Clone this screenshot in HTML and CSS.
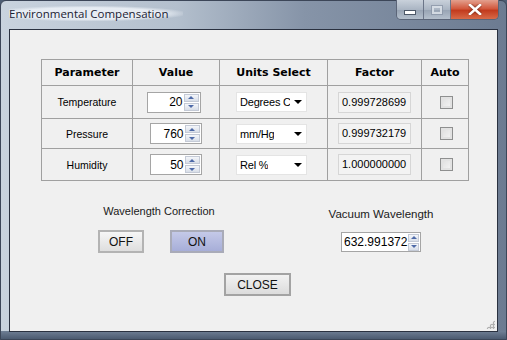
FILE: index.html
```html
<!DOCTYPE html>
<html lang="en">
<head>
  <meta charset="UTF-8">
  <title>Environmental Compensation</title>
  <link rel="stylesheet" href="styles.css">
</head>
<body>

  <div class="window">
    <!-- Title bar -->
    <div class="titlebar">
      <span class="title">Environmental Compensation</span>
      <div class="caption-btns">
        <div class="cap cap-min"><span class="min-glyph"></span></div>
        <div class="cap cap-max"><span class="max-glyph"></span></div>
        <div class="cap cap-close">
          <svg width="14" height="11" viewBox="0 0 14 11">
            <path d="M2 1 L12 10 M12 1 L2 10" stroke="#fff" stroke-width="2.6" stroke-linecap="square"/>
          </svg>
        </div>
      </div>
    </div>

    <div class="client">
      <table class="params">
        <tr class="head">
          <th class="c-param">Parameter</th>
          <th class="c-value">Value</th>
          <th class="c-units">Units Select</th>
          <th class="c-factor">Factor</th>
          <th class="c-auto">Auto</th>
        </tr>
        <tr class="r1">
          <td>Temperature</td>
          <td><div class="spin first"><span class="spin-val">20</span><span class="arrows"><i class="up"></i><i class="down"></i></span></div></td>
          <td><div class="select"><span class="sel-text">Degrees C</span><span class="caret"></span></div></td>
          <td><div class="factor">0.999728699</div></td>
          <td><span class="check"></span></td>
        </tr>
        <tr class="r2">
          <td>Pressure</td>
          <td><div class="spin narrow"><span class="spin-val">760</span><span class="arrows"><i class="up"></i><i class="down"></i></span></div></td>
          <td><div class="select"><span class="sel-text">mm/Hg</span><span class="caret"></span></div></td>
          <td><div class="factor">0.999732179</div></td>
          <td><span class="check"></span></td>
        </tr>
        <tr class="r3">
          <td>Humidity</td>
          <td><div class="spin narrow"><span class="spin-val">50</span><span class="arrows"><i class="up"></i><i class="down"></i></span></div></td>
          <td><div class="select"><span class="sel-text">Rel %</span><span class="caret"></span></div></td>
          <td><div class="factor">1.000000000</div></td>
          <td><span class="check"></span></td>
        </tr>
      </table>

      <div class="lower">
        <div class="group correction">
          <p class="label">Wavelength Correction</p>
          <div class="toggle">
            <button class="btn off">OFF</button>
            <button class="btn on">ON</button>
          </div>
        </div>
        <div class="group vacuum">
          <p class="label">Vacuum Wavelength</p>
          <div class="spin wide"><span class="spin-val">632.991372</span><span class="arrows"><i class="up"></i><i class="down"></i></span></div>
        </div>
      </div>

      <button class="btn close">CLOSE</button>
      <span class="grip"></span>
    </div>
  </div>

</body>
</html>
```

FILE: styles.css
```css
* {
  margin: 0;
  padding: 0;
  box-sizing: border-box;
}

body {
  width: 507px;
  height: 340px;
  overflow: hidden;
  font-family: 'Liberation Sans', Arial, sans-serif;
  font-size: 11px;
  color: #000;
  background: #4e5e74;
}

/* Window frame */
.window {
  width: 507px;
  height: 340px;
  display: flex;
  flex-direction: column;
  padding: 0 8px 8px 8px;
  background: linear-gradient(90deg, #c9d3de 0%, #b3bfcd 35%, #8694a8 60%, #6c7b91 100%);
  border-radius: 6px 6px 0 0;
  border: 1px solid #3c4658;
  position: relative;
}

.window::after {
  content: "";
  position: absolute;
  left: 0;
  right: 0;
  bottom: 0;
  height: 8px;
  background: linear-gradient(180deg, #6f7f95, #4b5a70);
}

.titlebar {
  height: 28px;
  display: flex;
  align-items: flex-start;
  justify-content: space-between;
}

.title {
  font-family: 'Open Sans', 'Noto Sans', sans-serif;
  font-size: 11.5px;
  color: #1b2233;
  margin-top: 5px;
  padding: 0 14px 0 0;
  background: radial-gradient(ellipse at 45% 50%, rgba(235, 240, 246, 0.9) 55%, rgba(235, 240, 246, 0) 75%);
}

.caption-btns {
  display: flex;
  margin-top: -1px;
  margin-right: -1px;
  border: 1px solid #5b6578;
  border-top: none;
  border-radius: 0 0 5px 5px;
  overflow: hidden;
  height: 20px;
}

.cap {
  display: flex;
  align-items: center;
  justify-content: center;
  height: 19px;
}

.cap-min, .cap-max {
  width: 27px;
  background: linear-gradient(180deg, #c9d1db 0%, #aab5c3 50%, #97a3b3 51%, #b4bfcc 100%);
  border-right: 1px solid #6b7588;
}

.min-glyph {
  width: 10px;
  height: 3px;
  background: #fff;
  margin-top: 5px;
  box-shadow: 0 0 0 1px #4d5868;
}

.max-glyph {
  width: 10px;
  height: 8px;
  border: 2px solid #dfe5ec;
  box-shadow: 0 0 0 1px #8b97a8;
  opacity: 0.8;
}

.cap-close {
  width: 47px;
  background: linear-gradient(180deg, #e3a08e 0%, #d2593e 45%, #c23b1e 55%, #d86a48 100%);
}

.cap-close svg path {
  filter: drop-shadow(0 0 1px #5a1a0c);
}

/* Client area */
.client {
  flex: 1;
  background: #f0f0f0;
  border: 1px solid #2a3140;
  padding: 29px 0 0 31px;
  position: relative;
  z-index: 1;
  margin-bottom: -1px;
}

/* Parameter table */
.params {
  border-collapse: collapse;
  width: 428px;
  table-layout: fixed;
}

.params th,
.params td {
  border: 1px solid #a0a0a0;
  text-align: center;
  vertical-align: middle;
  font-weight: normal;
}

.params th {
  font-family: 'DejaVu Sans', Verdana, sans-serif;
  font-weight: bold;
  font-size: 11px;
  height: 26px;
}

.c-param { width: 91px; }
.c-value { width: 87px; }
.c-units { width: 108px; }
.c-factor { width: 94px; }
.c-auto { width: 47px; }

.r1 td { height: 33px; }
.r2 td { height: 30px; }
.r3 td { height: 32px; }

.params td:first-child {
  font-size: 10.5px;
}

/* Spin box */
.spin {
  display: inline-flex;
  align-items: center;
  height: 21px;
  width: 54px;
  background: #fff;
  border: 1px solid #a5a5a5;
  vertical-align: middle;
}

.spin.first {
  margin-left: -5px;
}

.spin.narrow {
  width: 52px;
  margin-left: -1px;
}

.spin-val {
  flex: 1;
  text-align: right;
  font-size: 12px;
  padding-right: 1px;
}

.arrows {
  display: flex;
  flex-direction: column;
  gap: 1px;
  width: 15px;
  margin-right: 1px;
}

.arrows i {
  height: 8px;
  display: flex;
  align-items: center;
  justify-content: center;
  background: linear-gradient(180deg, #f4f6fa, #d8dee8);
  border: 1px solid #c4cad6;
}

.arrows i::after {
  content: "";
  border-left: 3px solid transparent;
  border-right: 3px solid transparent;
}

.arrows .up::after {
  border-bottom: 3px solid #4e6aa8;
}

.arrows .down::after {
  border-top: 3px solid #4e6aa8;
}

.spin.wide {
  width: 80px;
  height: 20px;
}

.spin.wide .spin-val {
  font-size: 12px;
  text-align: left;
  padding-left: 2px;
  white-space: nowrap;
}

/* Select */
.select {
  display: flex;
  align-items: center;
  justify-content: space-between;
  width: 71px;
  height: 20px;
  margin-left: 16px;
  background: #fff;
  border: 1px solid #e4e4e4;
  padding: 0 4px 0 3px;
  font-size: 11px;
  text-align: left;
  white-space: nowrap;
}

.sel-text {
  overflow: hidden;
  letter-spacing: -0.2px;
}

.caret {
  flex: none;
  margin-left: 4px;
  border-left: 4px solid transparent;
  border-right: 4px solid transparent;
  border-top: 4px solid #000;
}

/* Factor */
.factor {
  width: 73px;
  height: 21px;
  margin-left: 10px;
  background: #f3f3f3;
  border: 1px solid #d6d6d6;
  font-size: 11px;
  line-height: 19px;
  text-align: left;
  padding-left: 3px;
}

/* Checkbox */
.check {
  display: inline-block;
  width: 13px;
  height: 13px;
  border: 1px solid #8e8f8f;
  background: linear-gradient(135deg, #dcdcdc, #f6f6f6);
  box-shadow: inset 0 0 0 2px #e2e2e2;
  vertical-align: middle;
  margin-left: 3px;
}

/* Lower section */
.lower {
  display: flex;
  margin-top: 24px;
  margin-left: 57px;
  gap: 102px;
}

.group {
  display: flex;
  flex-direction: column;
  align-items: center;
}

.label {
  font-size: 11px;
  color: #1a1a1a;
  white-space: nowrap;
}

.correction {
  width: 126px;
  align-items: stretch;
}

.correction .label {
  text-align: center;
  margin-left: -4px;
}

.toggle {
  display: flex;
  justify-content: space-between;
  margin-top: 13px;
}

.vacuum {
  width: 110px;
}

.vacuum .label {
  margin-top: 3px;
  font-size: 11.5px;
}

.vacuum .spin {
  margin-top: 12px;
}

.btn {
  font-family: 'Liberation Sans', Arial, sans-serif;
  font-size: 12px;
  height: 23px;
  border: 2px solid #b3b3b3;
  background: linear-gradient(180deg, #f6f6f6, #dedede);
  color: #111;
  cursor: pointer;
}

.btn.off {
  width: 46px;
}

.btn.on {
  width: 54px;
  background: linear-gradient(180deg, #c4c9e8, #a7aed8);
  border-color: #a9abb8;
}

.btn.close {
  display: block;
  width: 67px;
  margin-top: 20px;
  margin-left: 183px;
  font-size: 12px;
  border-color: #a3a3a3;
  background: linear-gradient(180deg, #f2f2f2, #dcdcdc);
}

.grip {
  position: absolute;
  right: 2px;
  bottom: 2px;
  width: 9px;
  height: 9px;
  background: radial-gradient(circle, #b0b0b0 1px, transparent 1.5px) 0 0 / 3px 3px;
  clip-path: polygon(100% 0, 100% 100%, 0 100%);
}
```
